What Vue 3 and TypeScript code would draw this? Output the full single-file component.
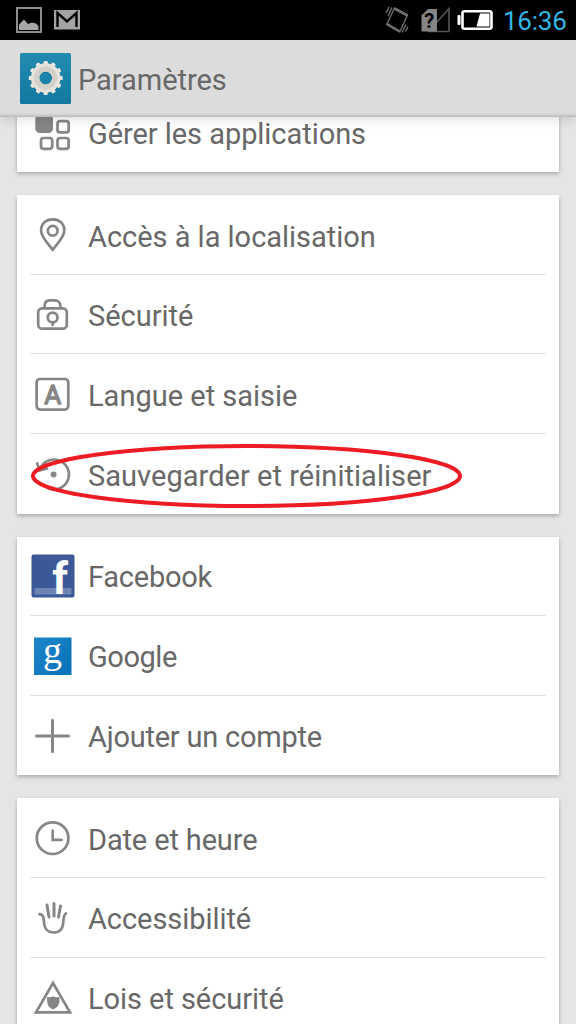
<script setup lang="ts">
type IconName =
  | 'apps' | 'pin' | 'lock' | 'lang' | 'restore' | 'facebook'
  | 'google' | 'plus' | 'clock' | 'hand' | 'legal'

interface Row {
  icon: IconName
  label: string
  tracking: number
  variant?: string
  marked?: boolean
}

const groups: Row[][] = [
  [{ icon: 'apps', label: 'Gérer les applications', tracking: -0.05 }],
  [
    { icon: 'pin', label: 'Accès à la localisation', tracking: -0.02, variant: 'low' },
    { icon: 'lock', label: 'Sécurité', tracking: -0.02, variant: 'short' },
    { icon: 'lang', label: 'Langue et saisie', tracking: 0, variant: 'low' },
    { icon: 'restore', label: 'Sauvegarder et réinitialiser', tracking: 0.04, variant: 'low', marked: true },
  ],
  [
    { icon: 'facebook', label: 'Facebook', tracking: -0.25, variant: 'short high' },
    { icon: 'google', label: 'Google', tracking: -0.45 },
    { icon: 'plus', label: 'Ajouter un compte', tracking: -0.23, variant: 'short' },
  ],
  [
    { icon: 'clock', label: 'Date et heure', tracking: -0.14, variant: 'low' },
    { icon: 'hand', label: 'Accessibilité', tracking: -0.06 },
    { icon: 'legal', label: 'Lois et sécurité', tracking: -0.06 },
  ],
]

const teeth = Array.from({ length: 12 }, (_, i) => i * 30)
</script>

<template>
  <div class="screen">
    <div class="status">
      <svg class="status-left" width="80" height="40" viewBox="0 0 80 40">
        <rect x="17" y="8" width="24" height="24" fill="none" stroke="#8c8c8c" stroke-width="2" />
        <path d="M19 30V24.500L21.500 22L24 19.500L28 24L32 22.500L36 23.500L38.500 26V30Z" fill="#a6a6a6" />
        <rect x="54" y="10" width="26" height="19.500" fill="#a3a3a3" />
        <path d="M57.500 27V13L67 21.500L76.500 13V27" fill="none" stroke="#000" stroke-width="2.400" />
      </svg>
      <svg class="status-right" width="120" height="40" viewBox="380 0 120 40">
        <g fill="none" stroke="#6e6e6e" stroke-width="1.400">
          <path d="M394.500 8L407.500 15L399.700 32L386.700 24.500Z" stroke-linejoin="round" />
          <path d="M394.500 8.500L407.500 15.500M387 24L399.700 31.500" stroke-width="2.600" />
          <path d="M386 13L389 7M388 16L392 7.500M402 32.500L406 24.500M405.500 31.500L408 26.500" />
        </g>
        <path d="M428 31.500H449V8.500L428 32" fill="none" stroke="#555" stroke-width="1.600" />
        <path d="M421.500 31.500V15.500L428 9H437V31.500Z" fill="#858585" />
        <text x="429.300" y="27.800" class="question">?</text>
        <rect x="457.500" y="15" width="3" height="10" rx="1" fill="#fff" />
        <rect x="462.500" y="11.200" width="29" height="17.600" rx="2" fill="none" stroke="#fff" stroke-width="2.600" />
        <path d="M480 13.500H489.500V26.500H476.500Z" fill="#fff" />
      </svg>
      <span class="time">16:36</span>
    </div>

    <header class="bar">
      <svg class="logo" width="51" height="51" viewBox="0 0 51 51">
        <defs>
          <linearGradient id="logoBg" x1="0" y1="0" x2="0" y2="1">
            <stop offset="0" stop-color="#248bb0" />
            <stop offset="1" stop-color="#1179a1" />
          </linearGradient>
        </defs>
        <rect width="51" height="51" rx="1.500" fill="url(#logoBg)" />
        <circle cx="25.700" cy="26.500" r="11" fill="none" stroke="#0b6587" stroke-width="8" opacity=".45" />
        <g fill="#ebe9e1">
          <rect
            v-for="a in teeth"
            :key="a"
            x="23.600"
            y="8"
            width="4.200"
            height="6"
            rx="1.200"
            :transform="`rotate(${a} 25.7 25)`"
          />
        </g>
        <circle cx="25.700" cy="25" r="10.600" fill="none" stroke="#e6e3dc" stroke-width="8.400" />
        <circle cx="25.700" cy="25" r="9" fill="none" stroke="#d3d0c9" stroke-width="5" />
      </svg>
      <h1 class="title">Paramètres</h1>
    </header>

    <main class="content">
      <section v-for="(group, g) in groups" :key="g" class="card">
        <div v-for="row in group" :key="row.label" class="row" :class="row.variant">
          <svg class="icon" width="48" height="48" viewBox="0 0 48 48">
            <g v-if="row.icon === 'apps'" class="line">
              <rect x="6.300" y="5.500" width="17.700" height="18.500" rx="4.500" class="solid" />
              <rect x="28.500" y="12.200" width="11.200" height="11.200" rx="2.500" />
              <rect x="12" y="29" width="11.200" height="10.800" rx="2.500" />
              <rect x="28.500" y="29" width="11.200" height="10.800" rx="2.500" />
            </g>
            <g v-else-if="row.icon === 'pin'" class="line">
              <path d="M23.700 39C20 33.500 12.100 26.500 12.100 19.500C12.100 12.500 17 8.300 23.700 8.300S35.300 12.500 35.300 19.500C35.300 26.500 27.400 33.500 23.700 39Z" />
              <circle cx="23.700" cy="19.800" r="4.900" />
            </g>
            <g v-else-if="row.icon === 'lock'" class="line">
              <rect x="9.200" y="17.300" width="28.600" height="20.400" rx="4" />
              <path d="M15.500 17V15.500C15.500 11.500 17.800 9.400 21 9.400H25.800C29 9.400 31.500 11.500 31.500 15.500V17" />
              <circle cx="23.600" cy="26.500" r="4.900" />
              <path d="M23.600 31.500V34" />
            </g>
            <g v-else-if="row.icon === 'lang'" class="line">
              <rect x="7.600" y="9" width="31.700" height="30.600" rx="3.500" />
              <text x="23.800" y="33.700" class="letter">A</text>
            </g>
            <g v-else-if="row.icon === 'restore'" class="line">
              <path d="M10.500 20.500A15 15 0 1 1 20 38.700" />
              <path d="M8.300 13.500L10.300 20.500L18 18.500" />
              <circle cx="24.600" cy="24.400" r="3" class="solid" />
            </g>
            <g v-else-if="row.icon === 'facebook'">
              <rect x="2.500" y="1.500" width="43" height="43" rx="2" fill="#3b5998" />
              <rect x="5.500" y="35" width="37" height="6.500" fill="#6d84b4" />
              <text x="31" y="41" class="fb">f</text>
            </g>
            <g v-else-if="row.icon === 'google'">
              <defs>
                <linearGradient id="googleBg" x1="0" y1="0" x2="1" y2="1">
                  <stop offset="0" stop-color="#1f86ca" />
                  <stop offset="1" stop-color="#0670b8" />
                </linearGradient>
              </defs>
              <rect x="5" y="5.500" width="37.500" height="37.500" fill="url(#googleBg)" />
              <text x="23.500" y="30.500" class="goog">g</text>
            </g>
            <g v-else-if="row.icon === 'plus'" class="line">
              <path d="M7.500 23.900H39.500M23.500 8.200V39.500" class="thick" />
            </g>
            <g v-else-if="row.icon === 'clock'" class="line">
              <circle cx="23.600" cy="24.200" r="15.800" />
              <path d="M23.700 16.500V25.800H32.500" class="miter" />
            </g>
            <g v-else-if="row.icon === 'hand'" class="line">
              <path d="M18 11L20 23M25 9.500V22M31.500 12L29.500 23" class="thick" />
              <path d="M10.500 20.200C14 20.500 14.700 22.500 14.800 26C15 34 17.500 38.500 25 38.500C31.500 38.500 34 34 34.300 28C34.500 23.500 35 20.500 37 19.300" />
            </g>
            <g v-else class="line">
              <path d="M24 9L41 38.300H7Z" class="miter" />
              <path d="M18 23Q21.500 24 24.200 22.300Q27 24 30.500 23C30.500 31 29.500 33 24.200 35.500C19 33 18 31 18 23Z" class="solid" />
            </g>
          </svg>
          <span class="label" :style="{ letterSpacing: row.tracking + 'px' }">{{ row.label }}</span>
          <svg v-if="row.marked" class="mark" width="436" height="70" viewBox="0 0 436 70">
            <ellipse cx="218.500" cy="35" rx="213.500" ry="30" />
          </svg>
        </div>
      </section>
    </main>
  </div>
</template>

<style>
html,
body {
  margin: 0;
  background: #e5e5e5;
}
</style>

<style scoped>
.screen {
  width: 576px;
  height: 1024px;
  overflow: hidden;
  display: flex;
  flex-direction: column;
  background: #e5e5e5;
  font-family: Roboto, 'Noto Sans', sans-serif;
  color: #686868;
}
.status {
  flex: none;
  height: 40px;
  display: flex;
  background: #000;
}
.status-right {
  margin-left: 300px;
}
.question {
  font: 700 20px Roboto, sans-serif;
  fill: #000;
  text-anchor: middle;
}
.time {
  margin-left: 3px;
  line-height: 42px;
  font-size: 26px;
  letter-spacing: -0.25px;
  color: #33b5e5;
  white-space: nowrap;
}
.bar {
  position: relative;
  z-index: 1;
  flex: none;
  box-sizing: border-box;
  height: 77px;
  padding: 13px 0 0 20px;
  display: flex;
  background: linear-gradient(#dddddd 0, #dcdcdc 73px, #cfcfcf 75px, #b8b8b8 77px);
  box-shadow: 0 2px 12px rgba(0, 0, 0, 0.14);
}
.title {
  margin: 0 0 0 7px;
  font-size: 29px;
  line-height: 54px;
  font-weight: 400;
  letter-spacing: -0.05px;
  white-space: nowrap;
}
.content {
  flex: 1;
  min-height: 0;
  margin-top: -24px;
  padding: 0 17px;
  display: flex;
  flex-direction: column;
  gap: 23px;
}
.card {
  flex: none;
  background: #fff;
  box-shadow: 0 2px 4px rgba(0, 0, 0, 0.25);
}
.row {
  position: relative;
  box-sizing: border-box;
  height: 80px;
  padding: 16px 0 0 12px;
  display: flex;
}
.row.short,
.card:first-child .row {
  height: 79px;
}
.row:not(:last-child)::after {
  content: '';
  position: absolute;
  left: 13px;
  right: 13px;
  bottom: 0;
  height: 1px;
  background: #dfdfdf;
}
.icon {
  flex: none;
  overflow: visible;
}
.label {
  margin-left: 11px;
  font-size: 29px;
  line-height: 51px;
  white-space: nowrap;
}
.low .label {
  line-height: 53px;
}
.high .label {
  line-height: 49px;
}
.line {
  fill: none;
  stroke: #868686;
  stroke-width: 2.7;
  stroke-linecap: round;
  stroke-linejoin: round;
}
.solid {
  fill: #868686;
  stroke: none;
}
.thick {
  stroke-width: 3;
}
.miter {
  stroke-linejoin: miter;
}
.letter {
  font: 400 26px Roboto, sans-serif;
  text-anchor: middle;
  fill: #868686;
  stroke-width: 1.3;
}
.fb {
  font: 700 44px Roboto, sans-serif;
  fill: #fff;
  text-anchor: middle;
}
.goog {
  font: 400 38px 'Liberation Serif', serif;
  fill: #fff;
  text-anchor: middle;
}
.mark {
  position: absolute;
  left: 11px;
  top: 7px;
}
.mark ellipse {
  fill: none;
  stroke: #ed1c24;
  stroke-width: 4;
}
</style>
